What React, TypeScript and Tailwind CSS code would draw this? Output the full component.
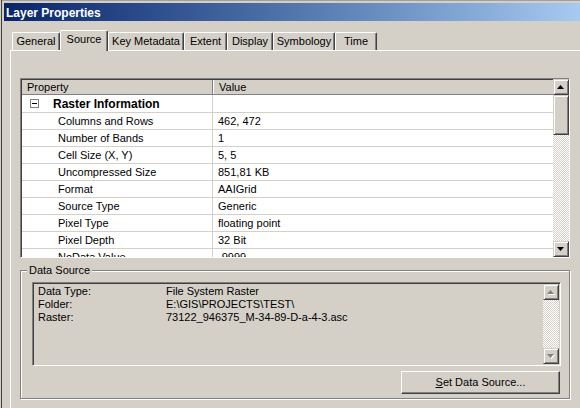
import React from 'react';

const tabs = [
    { label: 'General', w: 'w-[48px]' },
    { label: 'Source', w: 'w-[48px]', active: true },
    { label: 'Key Metadata', w: 'w-[76px]' },
    { label: 'Extent', w: 'w-[43px]' },
    { label: 'Display', w: 'w-[46px]' },
    { label: 'Symbology', w: 'w-[62px]' },
    { label: 'Time', w: 'w-[42px]' },
];

const rasterRows = [
    ['Columns and Rows', '462, 472'],
    ['Number of Bands', '1'],
    ['Cell Size (X, Y)', '5, 5'],
    ['Uncompressed Size', '851,81 KB'],
    ['Format', 'AAIGrid'],
    ['Source Type', 'Generic'],
    ['Pixel Type', 'floating point'],
    ['Pixel Depth', '32 Bit'],
    ['NoData Value', '-9999'],
];

const sourceRows = [
    ['Data Type:', 'File System Raster'],
    ['Folder:', 'E:\\GIS\\PROJECTS\\TEST\\'],
    ['Raster:', '73122_946375_M-34-89-D-a-4-3.asc'],
];

// raised 3d edge, the classic one
const raised = 'border border-t-[#d4d0c8] border-l-[#d4d0c8] border-r-[#404040] border-b-[#404040] shadow-[inset_1px_1px_#ffffff,inset_-1px_-1px_#808080] bg-[#d4d0c8]';
const checker = 'bg-[repeating-conic-gradient(#d4d0c8_0%_25%,#ffffff_0%_50%)] bg-[length:2px_2px]';

function Arrow({ dir, disabled }: { dir: 'up' | 'down'; disabled?: boolean }) {
    const d = dir === 'up' ? 'M3.5 0 L7 4 L0 4 Z' : 'M0 0 L7 0 L3.5 4 Z';
    return (
        <svg width="8" height="5" viewBox="0 0 8 5" className="block">
            {disabled && <path d={d} fill="#ffffff" transform="translate(1,1)" />}
            <path d={d} fill={disabled ? '#808080' : '#000000'} />
        </svg>
    );
}

function ScrollButton({ dir, disabled }: { dir: 'up' | 'down'; disabled?: boolean }) {
    return (
        <div className={`${raised} h-[16px] w-[16px] flex items-center justify-center shrink-0`}>
            <Arrow dir={dir} disabled={disabled} />
        </div>
    );
}

function Tab({ label, w, active }: { label: string; w: string; active?: boolean }) {
    return (
        <div
            className={`${w} ${active ? 'h-[21px] -mb-px z-10 pb-[3px]' : 'h-[18px]'} relative bg-[#d4d0c8] flex items-center justify-center border-t border-l border-white border-r border-r-[#404040] rounded-tl-[2px] rounded-tr-[2px] shadow-[inset_-1px_0_#808080] whitespace-nowrap`}
        >
            {label}
        </div>
    );
}

export default function App() {
    return (
        <div
            className="w-[580px] h-[408px] overflow-hidden bg-[#d4d0c8] text-[11px] text-black shadow-[inset_1px_0_#d4d0c8,inset_2px_0_#404040,inset_0_1px_#a0a0a0]"
            style={{ fontFamily: '"Liberation Sans", Arial, sans-serif' }}
        >
            {/* Title bar */}
            <div className="ml-[4px] mt-[3px] h-[18px] pl-[2px] pt-px flex items-center bg-gradient-to-r from-[#0a246a] to-[#a6caf0] text-white font-bold text-[12px]">
                Layer Properties
            </div>

            <div className="pl-[10px]">
                {/* Tabs */}
                <div className="mt-[9px] pl-[2px] flex items-end h-[20px]">
                    {tabs.map((t) => (
                        <Tab key={t.label} label={t.label} w={t.w} active={t.active} />
                    ))}
                </div>

                {/* Tab page */}
                <div className="border-t border-l border-white pl-[9px] pt-[27px] h-[400px]">
                    {/* Property grid */}
                    <div className="w-[550px] h-[180px] flex border border-t-[#808080] border-l-[#808080] border-r-white border-b-white">
                        <div className="flex-1 flex flex-col border-t border-l border-[#404040] bg-white overflow-hidden">
                            <div className="h-[15px] shrink-0 flex bg-[#d4d0c8] border-b border-[#808080]">
                                <div className="w-[191px] pl-[5px] pt-px border-r border-[#808080] flex items-center">Property</div>
                                <div className="flex-1 pl-[5px] pt-px border-l border-white flex items-center">Value</div>
                            </div>
                            <div className="h-[18px] shrink-0 flex border-b border-[#d4d0c8]">
                                <div className="w-[191px] border-r border-[#d4d0c8] flex items-center">
                                    <div className="ml-[8px] w-[9px] h-[9px] border border-[#808080] bg-white flex items-center justify-center">
                                        <div className="w-[5px] h-px bg-black" />
                                    </div>
                                    <span className="ml-[14px] font-bold text-[12px]">Raster Information</span>
                                </div>
                                <div className="flex-1" />
                            </div>
                            {rasterRows.map(([k, v]) => (
                                <div key={k} className="h-[17px] shrink-0 flex border-b border-[#d4d0c8]">
                                    <div className="w-[191px] pl-[36px] pt-px border-r border-[#d4d0c8] flex items-center whitespace-nowrap">{k}</div>
                                    <div className="flex-1 pl-[5px] pt-px flex items-center whitespace-nowrap">{v}</div>
                                </div>
                            ))}
                        </div>
                        <div className="w-[16px] flex flex-col">
                            <ScrollButton dir="up" />
                            <div className={`${raised} h-[40px] shrink-0`} />
                            <div className={`flex-1 ${checker}`} />
                            <ScrollButton dir="down" />
                        </div>
                    </div>

                    {/* Data Source group */}
                    <div className="relative mt-[12px] w-[550px] h-[129px] border border-[#808080] shadow-[inset_1px_1px_#ffffff,1px_1px_#ffffff] pl-[11px] pt-[11px] pr-[8px] flex flex-col">
                        <span className="absolute -top-[7px] left-[6px] px-[2px] leading-[13px] bg-[#d4d0c8]">Data Source</span>
                        <div className="w-[529px] h-[84px] flex border border-t-[#808080] border-l-[#808080] border-r-white border-b-white shadow-[inset_1px_1px_#404040] pl-[4px] pt-[1px] pr-px pb-px">
                            <div className="flex-1 pt-[1px] pl-[1px]">
                                {sourceRows.map(([k, v]) => (
                                    <div key={k} className="flex leading-[13px] whitespace-nowrap">
                                        <div className="w-[128px]">{k}</div>
                                        <div>{v}</div>
                                    </div>
                                ))}
                            </div>
                            <div className="w-[16px] flex flex-col">
                                <ScrollButton dir="up" disabled />
                                <div className={`flex-1 ${checker}`} />
                                <ScrollButton dir="down" disabled />
                            </div>
                        </div>
                        <div className="self-end mr-[1px] mt-[5px] w-[159px] h-[23px] flex items-center justify-center border border-t-white border-l-white border-r-[#404040] border-b-[#404040] shadow-[inset_-1px_-1px_#808080]">
                            <span><span className="underline">S</span>et Data Source...</span>
                        </div>
                    </div>
                </div>
            </div>
        </div>
    );
}
